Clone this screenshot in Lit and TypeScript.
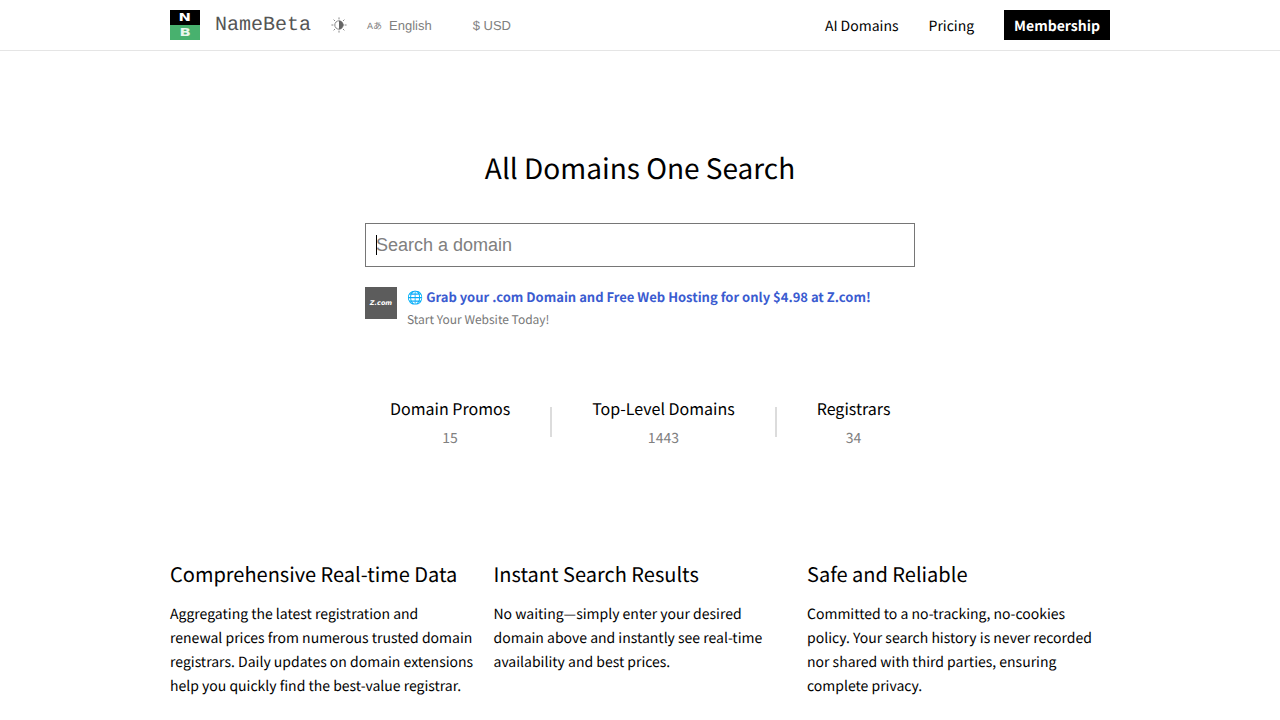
import { LitElement, html, css } from "lit";
import { customElement } from "lit/decorators.js";

const FEATURES = [
  ["Comprehensive Real-time Data", "Aggregating the latest registration and renewal prices from numerous trusted domain registrars. Daily updates on domain extensions help you quickly find the best-value registrar."],
  ["Instant Search Results", "No waiting—simply enter your desired domain above and instantly see real-time availability and best prices."],
  ["Safe and Reliable", "Committed to a no-tracking, no-cookies policy. Your search history is never recorded nor shared with third parties, ensuring complete privacy."],
];

@customElement("app-root")
export class AppRoot extends LitElement {
  static styles = css`
    :host { display: block; height: 720px; overflow: hidden; background: #fff; color: #000;
      font-family: "Noto Sans CJK SC", "Noto Sans", sans-serif; text-rendering: geometricPrecision; }
    * { box-sizing: border-box; }
    a { color: inherit; text-decoration: none; }
    header { height: 51px; border-bottom: 1px solid #e5e5e5; padding: 0 170px; display: flex; align-items: center; justify-content: space-between; }
    .left, .right { display: flex; align-items: center; }
    .logo { width: 30px; height: 30px; display: flex; flex-direction: column; font: 900 11px/15px "DejaVu Sans", sans-serif; text-align: center; color: #fff; }
    .logo span { height: 15px; display: block; }
    .logo i { display: inline-block; font-style: normal; transform: scaleX(1.35); }
    .logo .n { background: #000; }
    .logo .b { background: #48b16e; color: #e8f6ec; }
    .brand { font: 20px Courier, "Courier New", "Liberation Mono", monospace; margin-left: 15px; padding-top: 1px; color: #555; }
    .sun { margin-left: 20px; display: block; }
    .lang { font: 13px "Liberation Sans", Arial, sans-serif; color: #808080; display: flex; align-items: center; }
    .lang.en { margin-left: 20px; }
    .lang.usd { margin-left: 41px; }
    .tr { font-size: 9px; margin-right: 7px; font-family: "Liberation Sans", "Noto Sans CJK JP", sans-serif; }
    .right a { font-size: 14px; margin-left: 30px; padding-top: 1px; }
    .right a.member { background: #000; color: #fff; font-weight: 700; height: 30px; line-height: 30px; padding: 1px 10px 0; }
    main { display: flex; flex-direction: column; align-items: center; }
    h1 { font-size: 28px; font-weight: 400; line-height: 44px; margin: 95px 0 0; }
    .box { position: relative; margin-top: 33px; }
    .search { width: 550px; height: 44px; border: 1px solid #767676; padding: 0 10px; font: 18px "Liberation Sans", Arial, sans-serif; outline: none; display: block; color: #000; background: #fff; border-radius: 0; caret-color: transparent; }
    .search::placeholder { color: #808080; opacity: 1; }
    .caret { position: absolute; left: 11px; top: 12px; width: 1px; height: 20px; background: #000; }
    .promo { width: 550px; margin-top: 20px; display: flex; gap: 10px; }
    .zlogo { width: 32px; height: 32px; background: #5c5c5c; color: #fff; font: italic 700 6.5px/32px "DejaVu Sans", sans-serif; text-align: center; flex: none; }
    .promo .t { color: #3a5bd0; font-weight: 700; font-size: 13px; line-height: 20px; }
    .promo .s { color: #777; font-size: 12px; line-height: 20px; margin-top: 3px; }
    .stats { display: flex; margin-top: 64px; width: 550px; padding: 0 25px; }
    .stat { text-align: center; white-space: nowrap; }
    .stat .k { font-size: 16px; line-height: 28px; }
    .stat .v { font-size: 14px; line-height: 20px; color: #808080; margin-top: 6px; }
    .sep { width: 2px; height: 30px; background: #dcdcdc; margin: 13px 40px 0; flex: none; }
    .features { display: grid; grid-template-columns: 303.5px 293.5px 303px; gap: 20px; margin-top: 110px; width: 940px; }
    h2 { font-size: 20px; font-weight: 400; line-height: 32px; margin: 0 0 12px; }
    p { margin: 0; font-size: 14px; line-height: 24px; }
  `;

  render() {
    return html`
      <header>
        <div class="left">
          <div class="logo"><span class="n"><i>N</i></span><span class="b"><i>B</i></span></div>
          <span class="brand">NameBeta</span>
          <svg class="sun" width="16" height="16" viewBox="0 0 16 16" fill="none" stroke="#888" stroke-width="1" stroke-linecap="round">
            <circle cx="8" cy="8" r="4.2"/>
            <path d="M8 3.8a4.2 4.2 0 0 1 0 8.4z" fill="#666" stroke="none"/>
            <path d="M8 .8v1.2M8 14v1.2M.8 8H2M14 8h1.2M2.9 2.9l.9.9M12.2 12.2l.9.9M2.9 13.1l.9-.9M12.2 3.8l.9-.9"/>
          </svg>
          <span class="lang en"><span class="tr">Aあ</span>English</span>
          <span class="lang usd">$ USD</span>
        </div>
        <nav class="right">
          <a href="#">AI Domains</a>
          <a href="#">Pricing</a>
          <a href="#" class="member">Membership</a>
        </nav>
      </header>
      <main>
        <h1>All Domains One Search</h1>
        <div class="box">
          <input class="search" placeholder="Search a domain" />
          <div class="caret"></div>
        </div>
        <div class="promo">
          <div class="zlogo">Z.com</div>
          <div>
            <div class="t">🌐 Grab your .com Domain and Free Web Hosting for only $4.98 at Z.com!</div>
            <div class="s">Start Your Website Today!</div>
          </div>
        </div>
        <div class="stats">
          <div class="stat"><div class="k">Domain Promos</div><div class="v">15</div></div>
          <div class="sep"></div>
          <div class="stat"><div class="k">Top-Level Domains</div><div class="v">1443</div></div>
          <div class="sep"></div>
          <div class="stat"><div class="k">Registrars</div><div class="v">34</div></div>
        </div>
        <div class="features">
          ${FEATURES.map(([t, d]) => html`<div><h2>${t}</h2><p>${d}</p></div>`)}
        </div>
      </main>
    `;
  }
}
